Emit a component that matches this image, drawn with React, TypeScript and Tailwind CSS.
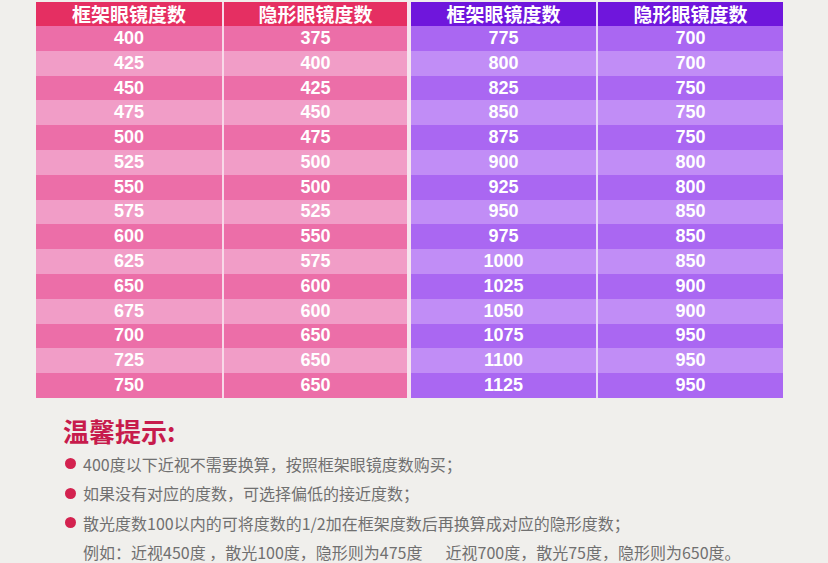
const rows: [string, string, string, string][] = [
  ['400', '375', '775', '700'],
  ['425', '400', '800', '700'],
  ['450', '425', '825', '750'],
  ['475', '450', '850', '750'],
  ['500', '475', '875', '750'],
  ['525', '500', '900', '800'],
  ['550', '500', '925', '800'],
  ['575', '525', '950', '850'],
  ['600', '550', '975', '850'],
  ['625', '575', '1000', '850'],
  ['650', '600', '1025', '900'],
  ['675', '600', '1050', '900'],
  ['700', '650', '1075', '950'],
  ['725', '650', '1100', '950'],
  ['750', '650', '1125', '950'],
];

const cjk = { fontFamily: '"Noto Sans CJK SC", "Noto Sans", sans-serif' };
const num = { fontFamily: '"Liberation Sans", Arial, sans-serif' };

type BlockProps = {
  data: [string, string][];
  header: string;
  dark: string;
  light: string;
  line: string;
  widths: string;
};

function Block({ data, header, dark, light, line, widths }: BlockProps) {
  return (
    <div className={`grid ${widths} gap-x-[2px] ${line}`}>
      <div className={`h-[24px] flex items-center justify-center text-white text-[19px] font-bold ${header}`} style={cjk}>
        框架眼镜度数
      </div>
      <div className={`h-[24px] flex items-center justify-center text-white text-[19px] font-bold ${header}`} style={cjk}>
        隐形眼镜度数
      </div>
      {data.map((r, i) =>
        r.map((v, j) => (
          <div
            key={`${i}-${j}`}
            className={`h-[24.8px] flex items-center justify-center text-white text-[18px] font-bold ${i % 2 === 0 ? dark : light}`}
            style={num}
          >
            {v}
          </div>
        ))
      )}
    </div>
  );
}

function Tip({ children }: { children: React.ReactNode }) {
  return (
    <div className="flex items-center h-[29.5px]">
      <span className="w-[11px] h-[11px] rounded-full bg-[#d3224f] ml-[65px] mr-[7px] shrink-0" />
      <span>{children}</span>
    </div>
  );
}

export default function App() {
  return (
    <div className="w-[828px] h-[563px] bg-[#f0efec] overflow-hidden pt-[2px]">
      <div className="flex ml-[36px] w-[747px] gap-[4px] bg-[#f6e4ee]">
        <Block
          data={rows.map((r) => [r[0], r[1]] as [string, string])}
          header="bg-[#e52f62]"
          dark="bg-[#ec6ea8]"
          light="bg-[#f19dc7]"
          line="bg-[#f8d9e8]"
          widths="grid-cols-[186px_183px]"
        />
        <Block
          data={rows.map((r) => [r[2], r[3]] as [string, string])}
          header="bg-[#6f16dc]"
          dark="bg-[#aa67f2]"
          light="bg-[#c18df6]"
          line="bg-[#e6d6f8]"
          widths="grid-cols-[185px_185px]"
        />
      </div>

      <div className="mt-[18px] ml-[63px] text-[26px] leading-[30px] font-bold text-[#c71b4c]" style={cjk}>
        温馨提示:
      </div>

      <div className="mt-[3px] text-[16px] text-[#707070]" style={cjk}>
        <Tip>400度以下近视不需要换算，按照框架眼镜度数购买；</Tip>
        <Tip>如果没有对应的度数，可选择偏低的接近度数；</Tip>
        <Tip>散光度数100以内的可将度数的1/2加在框架度数后再换算成对应的隐形度数；</Tip>
        <div className="flex items-center h-[29.5px] pl-[83px]">
          <span>例如：近视450度 ，散光100度，隐形则为475度</span>
          <span className="ml-[23px]">近视700度，散光75度，隐形则为650度。</span>
        </div>
      </div>
    </div>
  );
}
